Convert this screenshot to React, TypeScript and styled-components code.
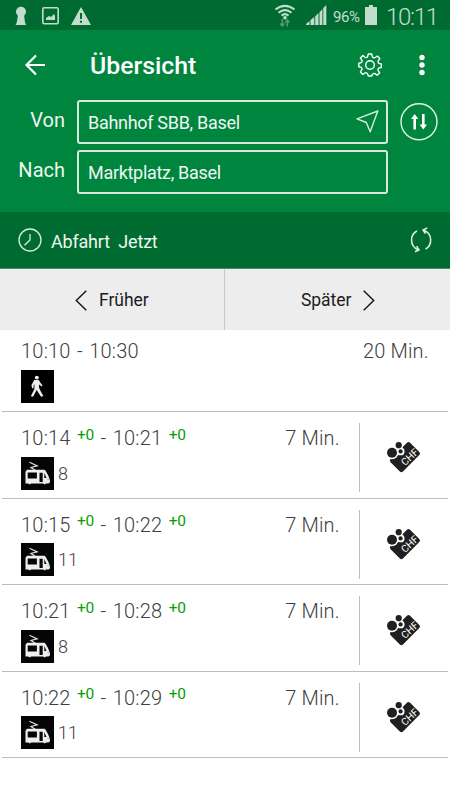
import React from "react";
import styled, { createGlobalStyle } from "styled-components";

const Global = createGlobalStyle`
  * { box-sizing: border-box; }
  body { margin: 0; background: #fff; font-family: Roboto, "Noto Sans", sans-serif; }
  svg { display: block; flex: none; }
`;

const Screen = styled.main`
  width: 450px;
  height: 800px;
  overflow: hidden;
  background: #fff;
`;

const StatusBar = styled.div`
  display: flex;
  align-items: center;
  height: 30px;
  padding: 0 12px 0 14px;
  background: #006b30;
  color: #c3ddcd;
`;

const NotificationIcons = styled.svg`
  margin-top: 2px;
`;

const StatusGap = styled.div`
  flex: 1;
`;

const SignalIcon = styled.svg`
  margin-left: 9px;
`;

const BatteryIcon = styled.svg`
  margin-left: 4px;
`;

const Percent = styled.span`
  width: 28px;
  margin-left: 6px;
  padding-top: 3px;
  font-size: 15px;
  line-height: 30px;
  letter-spacing: -0.4px;
  white-space: nowrap;
`;

const Clock = styled.span`
  width: 52px;
  margin-left: 9px;
  padding-top: 3px;
  font-size: 24px;
  line-height: 30px;
  font-weight: 300;
  letter-spacing: -1.3px;
  white-space: nowrap;
`;

const Header = styled.header`
  height: 182px;
  background: #00853e;
  color: #fff;
`;

const TitleBar = styled.div`
  display: flex;
  align-items: center;
  height: 70px;
  padding: 0 25px 0 24px;
`;

const Title = styled.h1`
  flex: 1;
  margin: 2px 0 0 44px;
  font-size: 24.8px;
  line-height: 30px;
  font-weight: 500;
`;

const MoreIcon = styled.svg`
  margin-left: 37px;
`;

const Form = styled.div`
  display: grid;
  grid-template-columns: 65px 311px 38px;
  grid-template-rows: 44px 44px;
  column-gap: 12px;
  row-gap: 6px;
`;

const Label = styled.label`
  padding-top: 8px;
  text-align: right;
  font-size: 20px;
  line-height: 24px;
  color: #eef7f1;
`;

const Field = styled.div`
  display: flex;
  align-items: center;
  justify-content: space-between;
  padding: 0 7px 0 9px;
  border: 2px solid #d5e9dc;
  border-radius: 3px;
  font-size: 18px;
  letter-spacing: -0.3px;
  color: #eef7f1;
`;

const LocateIcon = styled.svg`
  margin-top: -2px;
`;

const SwapButton = styled.button`
  width: 38px;
  height: 38px;
  margin: 3px 0 0;
  padding: 0;
  border: 0;
  background: none;
`;

const TimeBar = styled.div`
  display: flex;
  align-items: center;
  height: 57px;
  padding: 0 17px 0 18px;
  border-bottom: 1px solid #468f62;
  background: #006b30;
  color: #eef7f1;
`;

const TimeText = styled.span`
  flex: 1;
  margin: 3px 0 0 9px;
  font-size: 18px;
  letter-spacing: -0.2px;
  white-space: pre;
`;

const Pager = styled.nav`
  display: grid;
  grid-template-columns: 225px 225px;
  height: 61px;
  background: #ededed;
`;

const PageButton = styled.button<{ $next?: boolean }>`
  display: flex;
  align-items: center;
  gap: 12px;
  padding: 1px 0 0 ${(p) => (p.$next ? 76 : 75)}px;
  border: 0;
  border-right: ${(p) => (p.$next ? "0" : "1px solid #c8c8c8")};
  background: none;
  font: 400 17.5px Roboto, sans-serif;
  letter-spacing: -0.05px;
  color: #1c1c1c;
`;

const Connections = styled.div`
  padding: 0 2px;
`;

const Connection = styled.section<{ $walk?: boolean }>`
  display: flex;
  height: ${(p) => (p.$walk ? 82 : 86.6)}px;
  border-bottom: 1px solid #bdbdbd;
  padding-left: 19px;
`;

const Details = styled.div<{ $walk?: boolean }>`
  width: ${(p) => (p.$walk ? 407 : 318)}px;
  padding-top: ${(p) => (p.$walk ? 8 : 13)}px;
`;

const Summary = styled.div`
  display: flex;
  justify-content: space-between;
  height: 26px;
  font-size: 20px;
  line-height: 26px;
  font-weight: 300;
  color: #404040;
  white-space: nowrap;
`;

const Times = styled.span`
  letter-spacing: 0.22px;
  word-spacing: 1.2px;
`;

const Duration = styled.span`
  letter-spacing: 0.12px;
  margin-right: -0.6px;
`;

const Delay = styled.span`
  position: relative;
  top: -5.5px;
  font-size: 15.5px;
  font-weight: 400;
  letter-spacing: -0.2px;
  color: #00a000;
`;

const Transport = styled.div<{ $walk?: boolean }>`
  display: flex;
  align-items: center;
  gap: 4px;
  margin-top: ${(p) => (p.$walk ? 6 : 5.5)}px;
  font-size: 18px;
  font-weight: 300;
  color: #404040;
`;

const Fare = styled.div`
  width: 89px;
  height: 69px;
  margin: 11px 0 0 20px;
  padding: 18px 0 0 27px;
  border-left: 1px solid #bdbdbd;
`;

const WifiIcon = () => (
  <svg width="22" height="24" viewBox="0 0 22 24" fill="none" stroke="currentColor" strokeWidth="2.1">
    <path d="M1.5 6.5Q11-.8 20.5 6.5M4.5 9.7Q11 4.5 17.5 9.7M7.5 12.6Q11 9.7 14.5 12.6" />
    <circle cx="11" cy="14.8" r="1.8" fill="currentColor" stroke="none" />
    <path d="M8.3 16v7m-2-2.5 2 2.5 2-2.5M13.3 23.5v-6.5m-2 2.5 2-2.5 2 2.5" stroke="#4f9c70" strokeWidth="1.6" />
  </svg>
);

const GearIcon = () => (
  <svg width="24" height="24" viewBox="0 0 24 24" fill="none" stroke="#fff" strokeWidth="1.4" strokeLinejoin="round">
    <circle cx="12" cy="12" r="4.3" />
    <path d="M10.3 1h3.4l.6 2.5q.3 1 1.3 1.2.8.3 1.6-.2l2.1-1.4 2.5 2.5-1.4 2.1q-.6.9-.2 1.8.3.9 1.4 1.1l1.7.3v3.6l-2 .4q-.9.2-1.2 1.1-.4.8.1 1.6l1.5 2.2-2.5 2.4-2.3-1.5q-.7-.4-1.5-.1-.9.3-1.1 1.2L13.7 23h-3.4l-.6-1.9q-.2-1-1.1-1.3-.8-.3-1.6.2l-2.2 1.4-2.4-2.4 1.4-2.3q.5-.7.1-1.5-.3-.9-1.2-1.1L.8 13.8v-3.6l1.900-.4q1-.2 1.3-1.1.3-.8-.2-1.6L2.4 5l2.5-2.5L7 4.300q.7.5 1.5.2 1-.3 1.2-1.2z" />
  </svg>
);

const PedestrianIcon = () => (
  <svg width="33" height="33" viewBox="0 0 33 33">
    <path fill="#000" d="M0 0h33v33H0z" />
    <ellipse cx="15.8" cy="7.6" rx="2" ry="1.9" fill="#eee" />
    <path fill="#eee" d="M13.2 10h4.600l1.500 2.500 2.200 2.900-.9 1.200-2.600-2v2.900l1.400 3.200 3 5.400-2.300.6-4.500-6.600-3.500 6.600-2.300-.5 3.500-7 .2-5.100-1 1.800.2 2.100-1.400.5-.9-3.200z" />
  </svg>
);

const TramIcon = () => (
  <svg width="33" height="33" viewBox="0 0 33 33">
    <path fill="#050505" d="M0 0h33v33H0z" />
    <path d="m8.500 5.200 7.700 3.700-6.200 1.500 4.500 3" fill="none" stroke="#ddd" strokeWidth="1.200" />
    <path fill="#eee" d="M6 12.700h17.500c2 1.700 4.500 7 5.400 10.400v2.400l-1.600 1H25l-1.300 1-1.500-1H10l-1 1-1.800-1H4.500V14.700z" />
    <path fill="#050505" d="M6.700 15.400h9.200v6.200H6.700zM18.500 15.700h3.200v9.200h-3.200zM23.300 16l2.200 5h-2.200zM26.700 22.300l1.200.8h-1.100z" />
  </svg>
);

const FareIcon = () => (
  <svg width="34" height="32" viewBox="0 0 34 32">
    <rect x="4.2" y="7.3" width="27.5" height="17.5" rx="2.2" fill="#221f20" transform="rotate(-45 17.95 16.05)" />
    <g fill="#fff">
      <circle cx="5" cy="11.7" r="6.5" />
      <circle cx="11.7" cy="4.2" r="4.5" />
      <circle cx="13.6" cy="10.4" r="3.9" />
    </g>
    <g fill="#221f20">
      <circle cx="5" cy="11.7" r="5" />
      <circle cx="11.7" cy="4.2" r="3.1" />
      <circle cx="13.6" cy="10.4" r="2.1" />
    </g>
    <text transform="translate(25 18.6) rotate(-43)" textAnchor="middle" fontFamily="Roboto" fontSize="10" fill="#fff">CHF</text>
  </svg>
);

const trips = [
  { from: "10:14", to: "10:21", line: "8" },
  { from: "10:15", to: "10:22", line: "11" },
  { from: "10:21", to: "10:28", line: "8" },
  { from: "10:22", to: "10:29", line: "11" },
];

export default function App() {
  return (
    <Screen>
      <Global />
      <StatusBar>
        <NotificationIcons width="77" height="22" viewBox="0 0 77 22" fill="currentColor">
          <path d="M7 1.800a5 5 0 0 1 5 5c0 2-1.200 3-1.900 4l1 7 1.100 2.200H1.500L2.700 17.800l1.200-7C3 10 2 8.500 2 6.800a5 5 0 0 1 5-5z" />
          <rect x="28.800" y="2.700" width="15.400" height="16" rx="1.500" fill="none" stroke="currentColor" strokeWidth="1.600" />
          <path d="M32 15v-2l3-2 2 1 3-3 1 2v4zM77 20H57L67 2z" />
          <path d="M67 8v6m0 1.800v2" stroke="#006b30" strokeWidth="2" />
        </NotificationIcons>
        <StatusGap />
        <WifiIcon />
        <SignalIcon width="22" height="22" viewBox="0 0 22 22" fill="currentColor">
          <path d="M1 21v-1l3.500-3V21zM5.500 21v-5l3.800-3v8zM10.200 21v-8.500L13.500 9v12zM14.500 21V8.500L17.400 5v16zM18.300 21V4L21.300 1v20z" />
        </SignalIcon>
        <Percent>96%</Percent>
        <BatteryIcon width="12" height="20" viewBox="0 0 12 20" fill="currentColor">
          <path d="M4 0h4v2h4v18H0V2h4z" />
        </BatteryIcon>
        <Clock>10:11</Clock>
      </StatusBar>
      <Header>
        <TitleBar>
          <svg width="22" height="22" viewBox="0 0 22 22" fill="none" stroke="#fff" strokeWidth="2.200">
            <path d="M21 11H2.500M12 1.500 2.500 11l9.500 9.500" />
          </svg>
          <Title>Übersicht</Title>
          <GearIcon />
          <MoreIcon width="6" height="22" viewBox="0 0 6 22" fill="#fff">
            <circle cx="3" cy="3.500" r="2.700" /><circle cx="3" cy="11" r="2.700" /><circle cx="3" cy="18.500" r="2.700" />
          </MoreIcon>
        </TitleBar>
        <Form>
          <Label>Von</Label>
          <Field>
            Bahnhof SBB, Basel
            <LocateIcon width="23" height="23" viewBox="0 0 23 23" fill="none" stroke="#d8ede0" strokeWidth="1.400" strokeLinejoin="round">
              <path d="M21.800 1 1 8.800l9.300 3.700 3.900 9.300z" />
            </LocateIcon>
          </Field>
          <SwapButton aria-label="Tauschen">
            <svg width="38" height="38" viewBox="0 0 38 38" fill="none" stroke="#e2f2e8">
              <circle cx="19" cy="18.800" r="18" strokeWidth="1.400" />
              <path d="M14.700 26.500V14M23.300 11v12" stroke="#fff" strokeWidth="2.600" />
              <path d="m11 16 3.700-5 3.700 5zM19.600 21.500l3.700 5 3.700-5z" fill="#fff" stroke="none" />
            </svg>
          </SwapButton>
          <Label>Nach</Label>
          <Field>Marktplatz, Basel</Field>
        </Form>
      </Header>
      <TimeBar>
        <svg width="24" height="24" viewBox="0 0 24 24" fill="none" stroke="#d8ede0" strokeWidth="1.300">
          <circle cx="12" cy="12" r="11" /><path d="M12 6v6l-5.500 5.300" />
        </svg>
        <TimeText>{"Abfahrt  Jetzt"}</TimeText>
        <svg width="24" height="26" viewBox="0 0 24 26" fill="none" stroke="#e3f2e9" strokeWidth="1.500">
          <path d="M8 4C.8 7.500.3 19 9.200 23M6 24.800l4-1.800-2.400-3.800M16.500 22C23.700 18 23.500 6.800 15 3.300M18.300.8 14 3l2.500 3.700" />
        </svg>
      </TimeBar>
      <Pager>
        <PageButton>
          <svg width="12" height="21" viewBox="0 0 12 21" fill="none" stroke="#111" strokeWidth="1.400"><path d="m11.300.8-10 9.700 10 9.700" /></svg>
          Früher
        </PageButton>
        <PageButton $next>
          Später
          <svg width="12" height="21" viewBox="0 0 12 21" fill="none" stroke="#111" strokeWidth="1.400"><path d="m.7.8 10 9.700-10 9.700" /></svg>
        </PageButton>
      </Pager>
      <Connections>
        <Connection $walk>
          <Details $walk>
            <Summary><Times>10:10 - 10:30</Times><Duration>20 Min.</Duration></Summary>
            <Transport $walk><PedestrianIcon /></Transport>
          </Details>
        </Connection>
        {trips.map((trip) => (
          <Connection key={trip.from}>
            <Details>
              <Summary>
                <Times>{trip.from} <Delay>+0</Delay> - {trip.to} <Delay>+0</Delay></Times>
                <Duration>7 Min.</Duration>
              </Summary>
              <Transport><TramIcon />{trip.line}</Transport>
            </Details>
            <Fare><FareIcon /></Fare>
          </Connection>
        ))}
      </Connections>
    </Screen>
  );
}
